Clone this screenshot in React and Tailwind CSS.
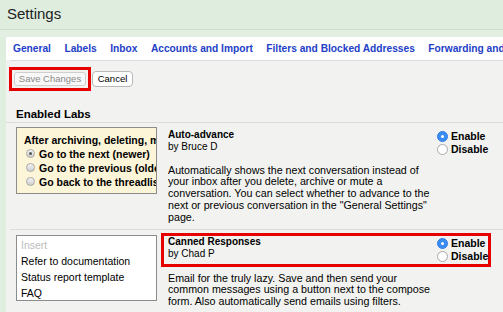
import React from 'react'

const font = { fontFamily: '"Liberation Sans", Arial, sans-serif' }

function SmallRadio({ checked }) {
  return (
    <span className="relative inline-block w-[9px] h-[9px] rounded-full border border-[#a8a8a8] bg-gradient-to-b from-[#f4f4f4] to-[#cfcfcf] mr-[4px] shrink-0">
      {checked && <span className="absolute left-[2px] top-[2px] w-[3px] h-[3px] rounded-full bg-[#555]" />}
    </span>
  )
}

function Radio({ checked, label }) {
  return (
    <div className="flex items-center h-[13.5px]">
      {checked ? (
        <span className="relative inline-block w-[11px] h-[11px] rounded-full bg-[#3a8cf3] border border-[#2f7ee6] mr-[3px] shrink-0">
          <span className="absolute left-[3px] top-[3px] w-[3px] h-[3px] rounded-full bg-white" />
        </span>
      ) : (
        <span className="inline-block w-[11px] h-[11px] rounded-full bg-white border border-[#a9a9a9] mr-[3px] shrink-0" />
      )}
      <span className="font-bold text-[10.5px] leading-[13px] text-black">{label}</span>
    </div>
  )
}

function Lab({ title, by, lines, highlighted }) {
  return (
    <div className="flex flex-col">
      <div className={`mt-[3px] border-[3px] ${highlighted ? 'border-[#e60000]' : 'border-transparent'} flex pl-[4px] h-[34px]`}>
        <div className="w-[269px] text-[10px] leading-[12px] text-black">
          <div className="font-bold">{title}</div>
          <div>{by}</div>
        </div>
        <div className="pt-[1px]">
          <Radio checked label="Enable" />
          <Radio label="Disable" />
        </div>
      </div>
      <div className={`${highlighted ? 'mt-[6px]' : 'mt-[5px]'} pl-[7px] text-[10.7px] leading-[11.8px] text-black whitespace-nowrap`}>
        {lines.map((l) => (
          <div key={l}>{l}</div>
        ))}
      </div>
    </div>
  )
}

export default function App() {
  const tabs = ['General', 'Labels', 'Inbox', 'Accounts and Import', 'Filters and Blocked Addresses', 'Forwarding and POP/IMAP']

  return (
    <div className="w-[503px] h-[312px] overflow-hidden bg-[#e3efe3] flex flex-col" style={font}>
      <div className="h-[29px] shrink-0 bg-[#dfeddf] flex items-center pl-[7px] text-[15px] text-[#222]">Settings</div>
      <div className="h-px shrink-0 bg-[#cfdfcf]" />
      <div className="h-[7px] shrink-0" />
      <div className="flex flex-1 min-h-0">
        <div className="w-[6px] shrink-0 bg-[#e0eee0]" />
        <div className="flex-1 bg-[#f2f3f0] flex flex-col min-w-0">
          <div className="bg-white h-[23px] shrink-0 flex items-center gap-[13.5px] pl-[7px] text-[10.2px] font-bold text-[#2340c8] whitespace-nowrap overflow-hidden">
            {tabs.map((t) => (
              <span key={t}>{t}</span>
            ))}
          </div>
          <div className="h-px shrink-0 bg-[#dcdcdc] ml-[4px]" />

          <div className="flex items-center mt-[6px] ml-[3px]">
            <div className="border-[3px] border-[#e60000] w-[82px] h-[24px] flex items-center pl-[2px]">
              <button className="w-[72px] h-[14px] rounded-[3px] border border-[#cfcfcf] bg-[#f8f8f8] text-[9.5px] text-[#8a8a8a] leading-none">
                Save Changes
              </button>
            </div>
            <button className="ml-[1px] w-[41px] h-[16px] rounded-[4px] border border-[#b8b8b8] bg-white text-[9.5px] text-black leading-none">
              Cancel
            </button>
          </div>

          <div className="mt-[18px] pl-[10px] text-[11.5px] font-bold text-black leading-none">Enabled Labs</div>
          <div className="h-px shrink-0 bg-[#dedede] mt-[1px]" />

          <div className="flex h-[106px] shrink-0">
            <div className="pl-[10px] pt-[4px] w-[155px] shrink-0">
              <div className="w-[141px] h-[67px] border border-[#8c8c8c] bg-[#fdf5d7] overflow-hidden pt-[5px] pl-[7px] text-[10.5px] font-bold text-black whitespace-nowrap leading-[14px]">
                <div>After archiving, deleting, mute</div>
                <div className="flex items-center pl-[2px]"><SmallRadio checked />Go to the next (newer)</div>
                <div className="flex items-center pl-[2px]"><SmallRadio />Go to the previous (older) conversation</div>
                <div className="flex items-center pl-[2px]"><SmallRadio />Go back to the threadlist</div>
              </div>
            </div>
            <Lab
              title="Auto-advance"
              by="by Bruce D"
              lines={[
                'Automatically shows the next conversation instead of',
                'your inbox after you delete, archive or mute a',
                'conversation. You can select whether to advance to the',
                'next or previous conversation in the "General Settings"',
                'page.',
              ]}
            />
          </div>
          <div className="h-px shrink-0 bg-[#dedede] ml-[4px]" />

          <div className="flex flex-1 min-h-0">
            <div className="pl-[10px] pt-[5px] w-[155px] shrink-0">
              <div className="w-[141px] h-[66px] border border-[#8c8c8c] bg-white pt-[1px] pl-[4px] text-[10.5px] leading-[16px] text-black whitespace-nowrap">
                <div className="text-[#bdbdbd]">Insert</div>
                <div>Refer to documentation</div>
                <div>Status report template</div>
                <div>FAQ</div>
              </div>
            </div>
            <Lab
              highlighted
              title="Canned Responses"
              by="by Chad P"
              lines={[
                'Email for the truly lazy. Save and then send your',
                'common messages using a button next to the compose',
                'form. Also automatically send emails using filters.',
              ]}
            />
          </div>
        </div>
      </div>
    </div>
  )
}
